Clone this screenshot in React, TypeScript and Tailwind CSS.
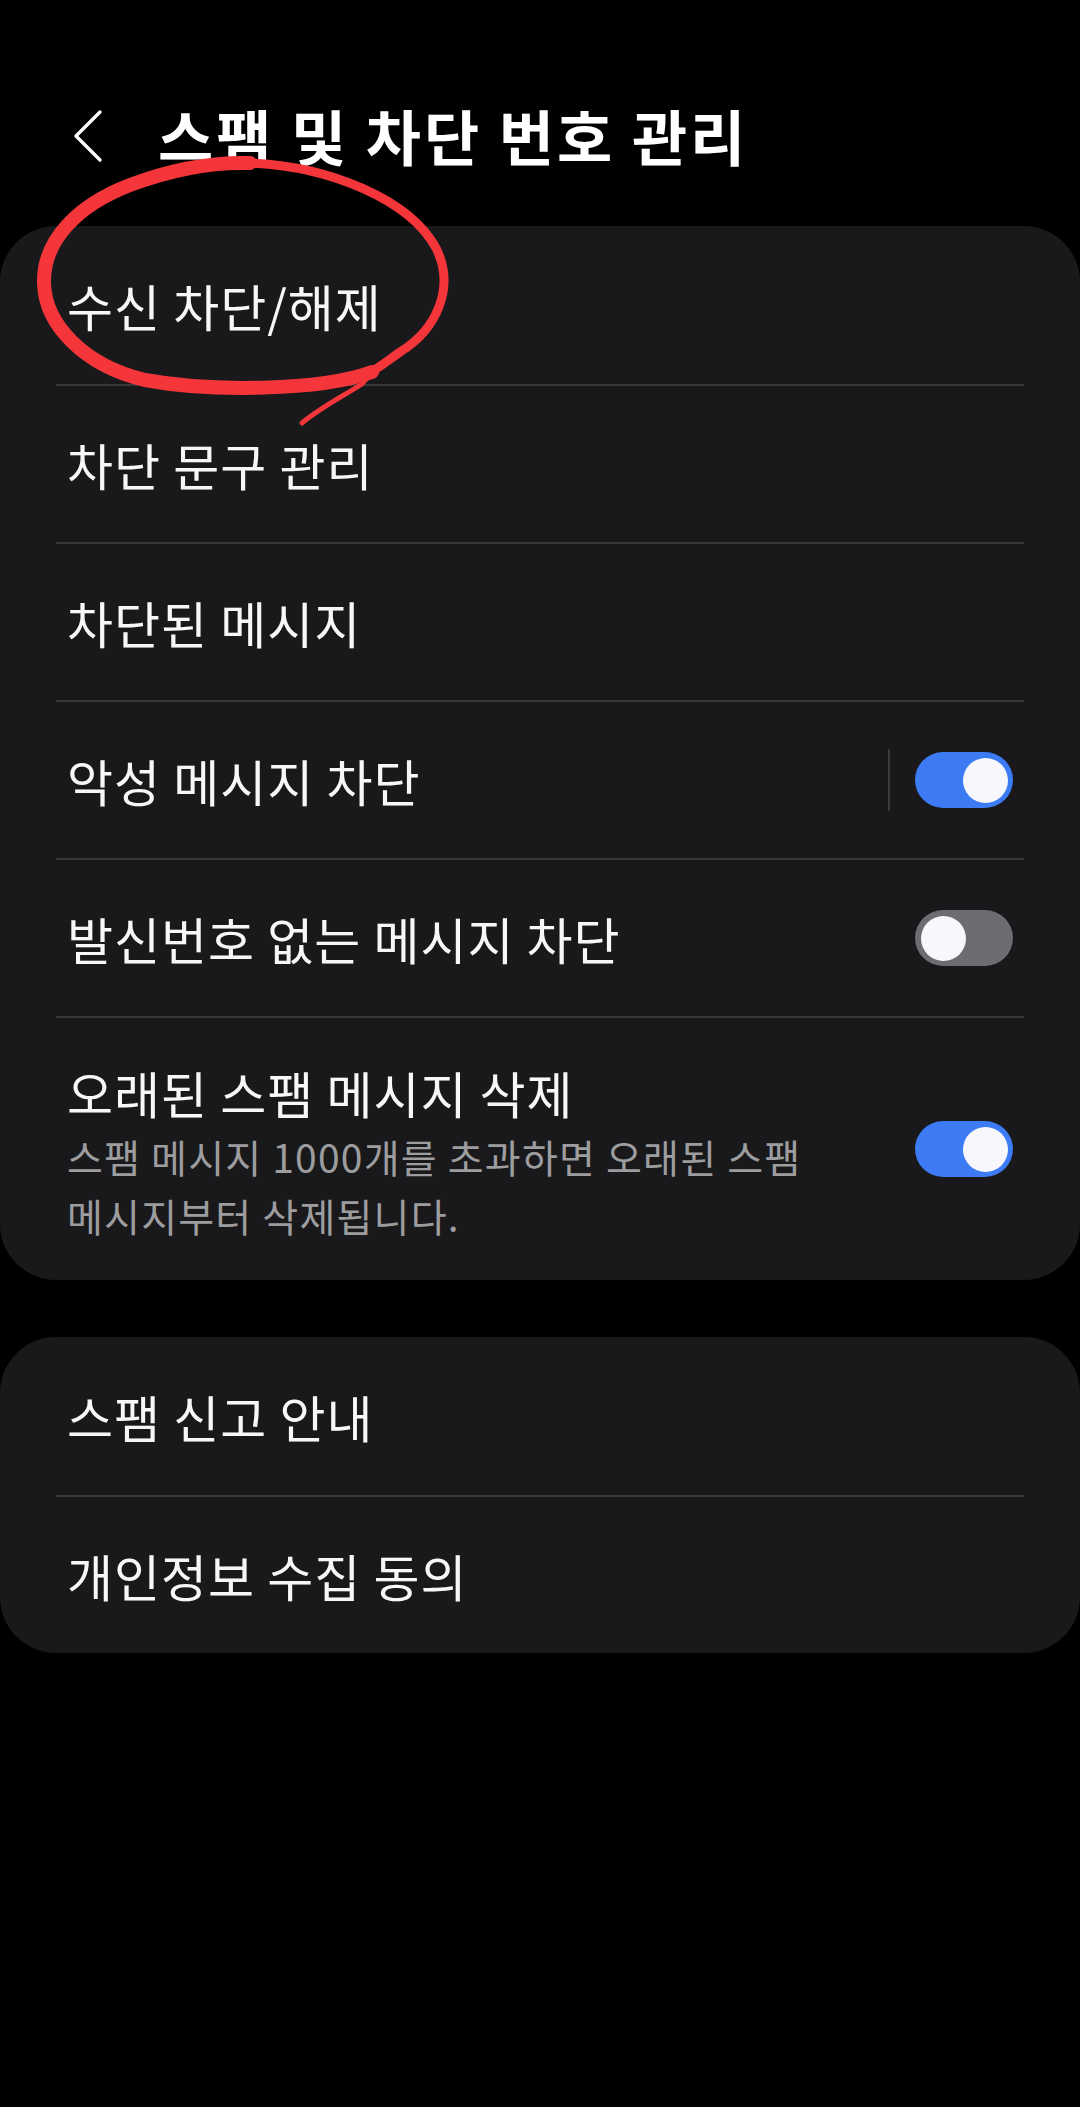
import React from "react";

function Toggle({ on }: { on: boolean }) {
  return on ? (
    <div className="w-[98px] h-[56px] rounded-full bg-[#3d7bf5] flex items-center justify-end pr-[5px]">
      <div className="w-[45px] h-[45px] rounded-full bg-[#f8f8fc]" />
    </div>
  ) : (
    <div className="w-[98px] h-[56px] rounded-full bg-[#6c6c71] flex items-center justify-start pl-[6px]">
      <div className="w-[45px] h-[45px] rounded-full bg-[#f8f8fc]" />
    </div>
  );
}

function Divider() {
  return <div className="mx-[56px] h-[2px] bg-[#38383a]" />;
}

function Row({
  label,
  h,
  right,
}: {
  label: string;
  h: string;
  right?: React.ReactNode;
}) {
  return (
    <div className={`${h} flex items-center pl-[67px] pr-[67px]`}>
      <span className="flex-1 text-[50px] leading-[60px] text-[#f7f7f9] tracking-[1px]">
        {label}
      </span>
      {right}
    </div>
  );
}

export default function App() {
  return (
    <div className="relative w-[1080px] h-[2107px] bg-black overflow-hidden font-['Noto_Sans_CJK_KR',sans-serif]">
      {/* Header */}
      <div className="h-[226px] pt-[44px] flex items-center">
        <svg
          width="40"
          height="60"
          viewBox="0 0 40 60"
          className="ml-[68px]"
          fill="none"
        >
          <polyline
            points="32,7 8,31 32,55"
            stroke="#ffffff"
            strokeWidth="3.4"
            strokeLinecap="round"
            strokeLinejoin="round"
          />
        </svg>
        <h1 className="ml-[50px] text-[60px] leading-[70px] font-bold text-white tracking-[3px]">
          스팸 및 차단 번호 관리
        </h1>
      </div>

      {/* Card 1 */}
      <div className="bg-[#19191b] rounded-[56px]">
        <Row label="수신 차단/해제" h="h-[158px]" />
        <Divider />
        <Row label="차단 문구 관리" h="h-[156px]" />
        <Divider />
        <Row label="차단된 메시지" h="h-[156px]" />
        <Divider />
        <Row
          label="악성 메시지 차단"
          h="h-[156px]"
          right={
            <div className="flex items-center">
              <div className="w-[2px] h-[62px] bg-[#3a3a3c] mr-[25px]" />
              <Toggle on={true} />
            </div>
          }
        />
        <Divider />
        <Row label="발신번호 없는 메시지 차단" h="h-[156px]" right={<Toggle on={false} />} />
        <Divider />
        <div className="h-[262px] flex items-center pl-[67px] pr-[67px]">
          <div className="flex-1 pt-[9px]">
            <div className="text-[50px] leading-[60px] text-[#f7f7f9] tracking-[1px]">
              오래된 스팸 메시지 삭제
            </div>
            <div className="mt-[5px] text-[39px] leading-[59px] text-[#9d9d9f] tracking-[1.2px]">
              스팸 메시지 1000개를 초과하면 오래된 스팸
              <br />
              메시지부터 삭제됩니다.
            </div>
          </div>
          <Toggle on={true} />
        </div>
      </div>

      {/* Card 2 */}
      <div className="mt-[57px] bg-[#19191b] rounded-[56px]">
        <Row label="스팸 신고 안내" h="h-[158px]" />
        <Divider />
        <Row label="개인정보 수집 동의" h="h-[156px]" />
      </div>

      {/* Red hand-drawn annotation */}
      <svg
        className="absolute left-0 top-0 pointer-events-none"
        width="1080"
        height="460"
        viewBox="0 0 1080 460"
        fill="none"
      >
        <path
          d="M 372 372 C 320 391, 210 392, 145 380 C 85 366, 45 325, 44 283 C 43 240, 78 205, 130 185 C 175 168, 215 162, 250 163"
          stroke="#f4363b"
          strokeWidth="14"
          strokeLinecap="round"
          strokeLinejoin="round"
        />
        <path
          d="M 250 163 C 330 166, 410 200, 436 248 C 456 288, 436 330, 400 352 C 386 362, 378 368, 370 373"
          stroke="#f4363b"
          strokeWidth="9"
          strokeLinecap="round"
          strokeLinejoin="round"
        />
        <path
          d="M 372 372 L 362 384 C 340 398, 320 408, 302 423"
          stroke="#f4363b"
          strokeWidth="5"
          strokeLinecap="round"
          strokeLinejoin="round"
        />
      </svg>
    </div>
  );
}
